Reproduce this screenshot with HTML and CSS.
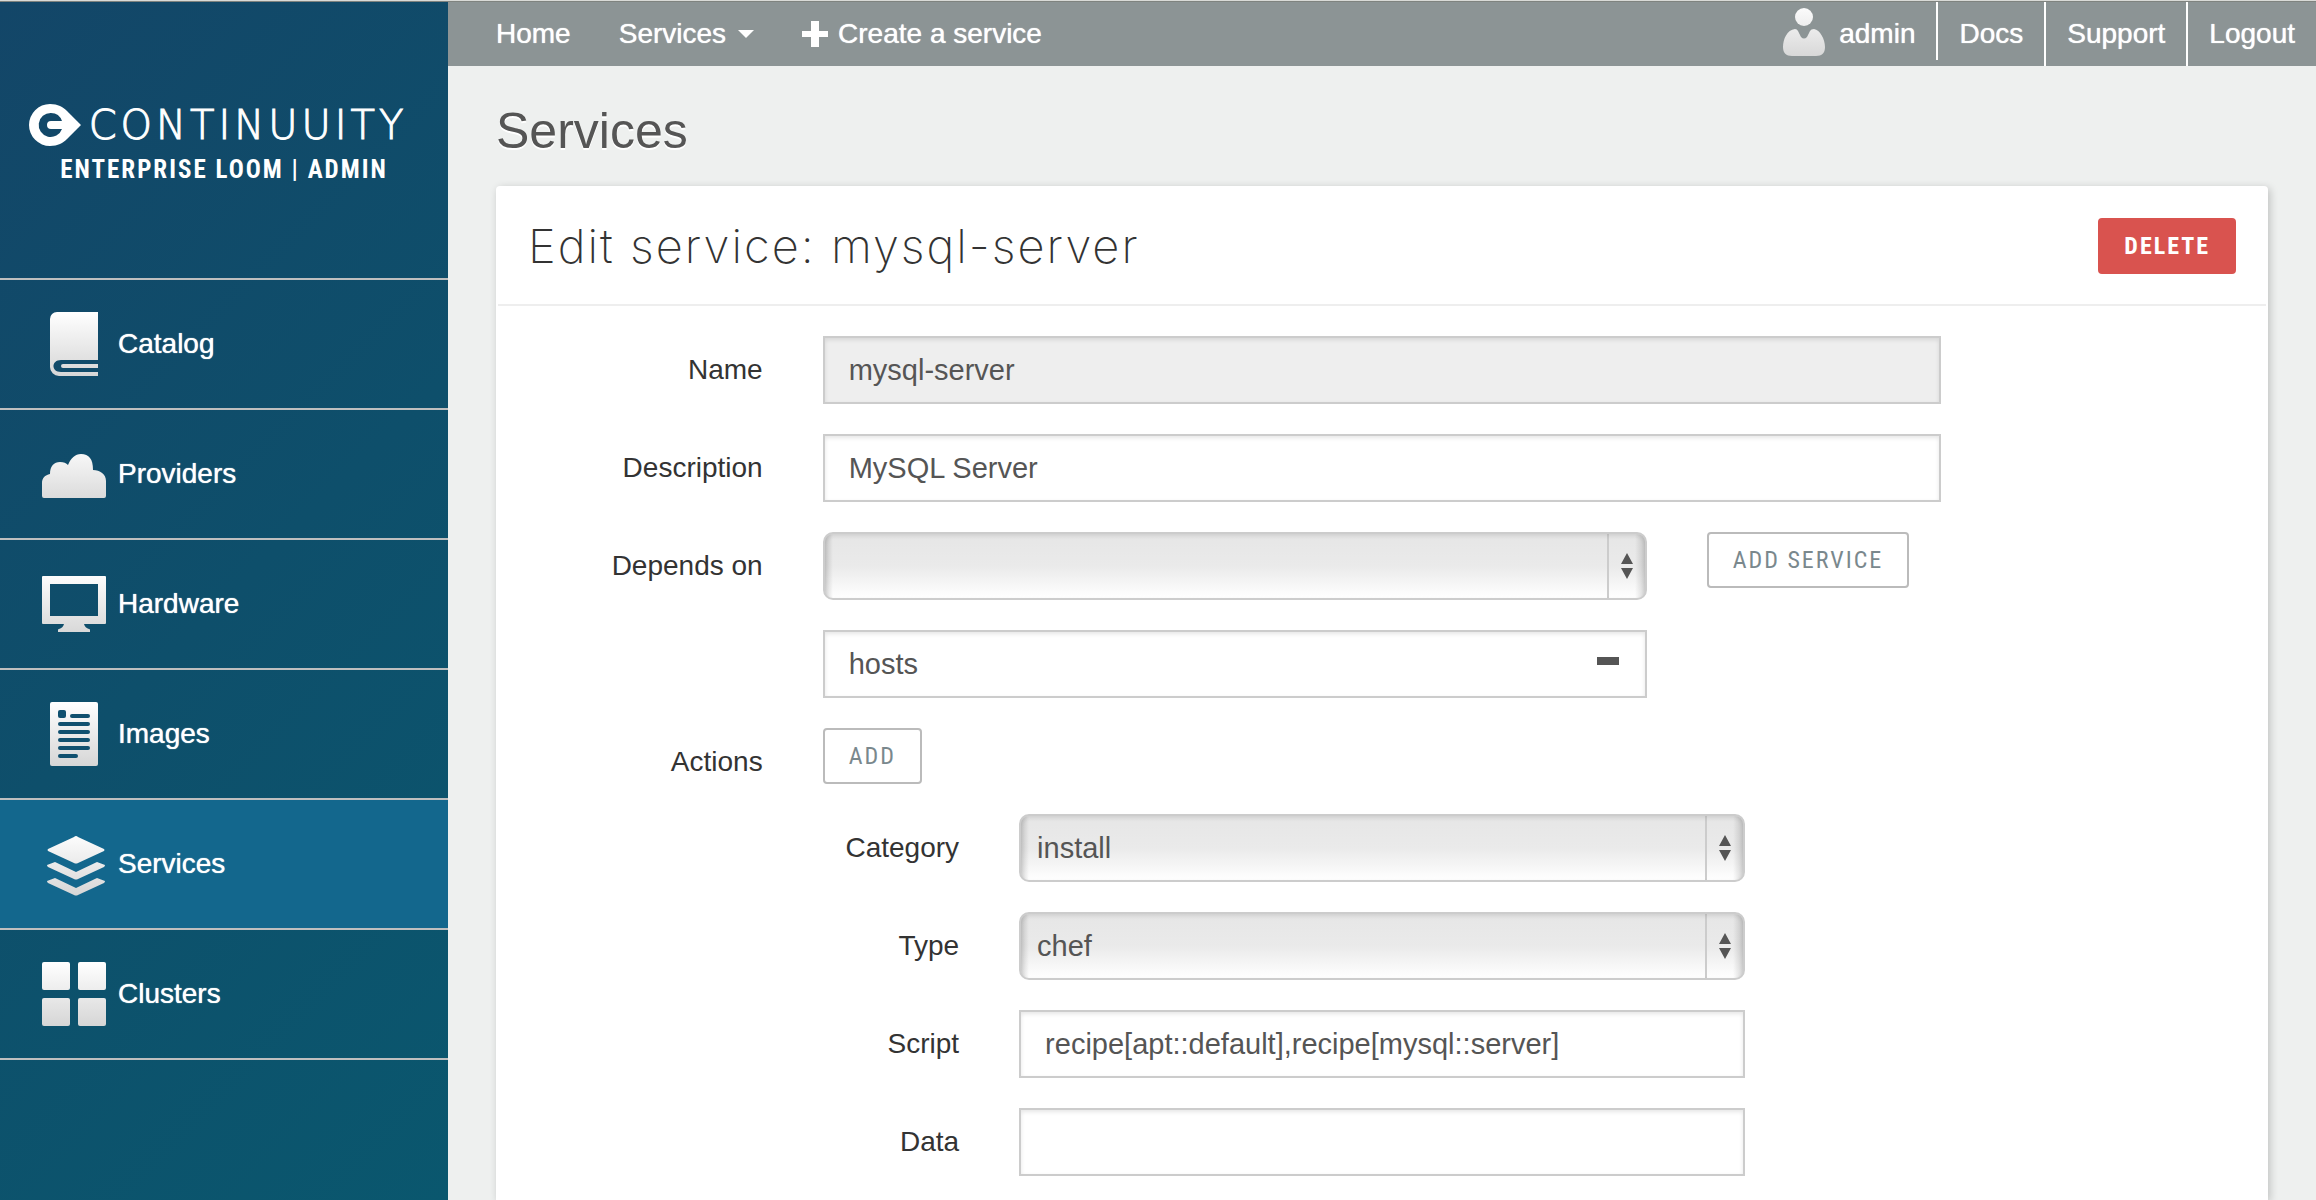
FILE: index.html
```html
<!DOCTYPE html>
<html lang="en">
<head>
<meta charset="utf-8">
<title>Edit service: mysql-server</title>
<link rel="stylesheet" href="styles.css">
</head>
<body>
<svg class="defs" width="0" height="0" aria-hidden="true">
  <defs>
    <linearGradient id="shade" gradientUnits="userSpaceOnUse" x1="0" y1="0" x2="0" y2="64">
      <stop offset="0" stop-color="#ffffff"/>
      <stop offset="1" stop-color="#d6d6d6"/>
    </linearGradient>
    <linearGradient id="shade-user" gradientUnits="userSpaceOnUse" x1="0" y1="0" x2="0" y2="48">
      <stop offset="0" stop-color="#fbfbfb"/>
      <stop offset="1" stop-color="#d8d8d8"/>
    </linearGradient>
  </defs>
</svg>
<div class="layout">
  <aside class="sidebar">
    <div class="brand">
      <a class="brand-name" href="#">
        <svg width="52" height="42" viewBox="0 0 52 42" aria-hidden="true">
          <path fill="#fff" fill-rule="evenodd" d="M21 0C29 0 34 3 38 7L52 21L38 35C34 39 29 42 21 42A21 21 0 0 1 21 0ZM22 9A12 12 0 1 0 33 25H22A4 4 0 0 1 22 17H33A12 12 0 0 0 22 9Z"/>
        </svg>
        <span class="wordmark">CONTINUUITY</span>
      </a>
      <div class="brand-sub">ENTERPRISE LOOM | ADMIN</div>
    </div>
    <nav class="side-nav">
      <a href="#">
        <svg width="64" height="64" aria-hidden="true"><path fill="url(#shade)" d="M15 0H56V48H19C9 48 9 60 19 60H56V64H17A9 9 0 0 1 8 55V7A7 7 0 0 1 15 0ZM21 52H56V56H21A2 2 0 0 1 21 52Z"/></svg>
        Catalog
      </a>
      <a href="#">
        <svg width="64" height="64" aria-hidden="true"><path fill="url(#shade)" d="M2 56Q0 56 0 54V41C0 36 3 33 8 32C8 24 12 20 18 20C22 20 24 21 26 23C29 16 33 12 39 12C47 12 51 17 51 28C58 28 64 32 64 39V54Q64 56 62 56Z"/></svg>
        Providers
      </a>
      <a href="#">
        <svg width="64" height="64" aria-hidden="true"><path fill="url(#shade)" fill-rule="evenodd" d="M1 4H63Q64 4 64 5V51Q64 52 63 52H42Q43 56 47 57Q48 57 48 58V60H16V58Q16 57 17 57Q21 56 22 52H1Q0 52 0 51V5Q0 4 1 4ZM8 12V44H56V12Z"/></svg>
        Hardware
      </a>
      <a href="#">
        <svg width="64" height="64" aria-hidden="true"><rect x="8" width="48" height="64" rx="2" fill="url(#shade)"/><g fill="#10506f"><rect x="16" y="8" width="8" height="8" rx="2"/><rect x="28" y="12" width="20" height="4" rx="2"/><rect x="16" y="20" width="32" height="4" rx="2"/><rect x="16" y="28" width="32" height="4" rx="2"/><rect x="16" y="36" width="32" height="4" rx="2"/><rect x="16" y="44" width="32" height="4" rx="2"/><rect x="16" y="52" width="20" height="4" rx="2"/></g></svg>
        Images
      </a>
      <a class="active" href="#">
        <svg width="64" height="64" aria-hidden="true"><path fill="url(#shade)" d="M34 4Q35 4 36 5L62 17Q63 18 62 19L36 31Q34 32 32 31L6 19Q5 18 6 17L32 5Q33 4 34 4ZM5 33L13 30L34 40L55 30L63 33Q63 34 62 35L36 47Q34 48 32 47L6 35Q5 34 5 33ZM5 49L13 46L34 56L55 46L63 49Q63 50 62 51L36 63Q34 64 32 63L6 51Q5 50 5 49Z"/></svg>
        Services
      </a>
      <a href="#">
        <svg width="64" height="64" aria-hidden="true"><g fill="url(#shade)"><rect width="28" height="28" rx="2"/><rect x="36" width="28" height="28" rx="2"/><rect y="36" width="28" height="28" rx="2"/><rect x="36" y="36" width="28" height="28" rx="2"/></g></svg>
        Clusters
      </a>
    </nav>
  </aside>
  <div class="main">
    <header class="topbar">
      <nav class="menu">
        <a href="#">Home</a>
        <a href="#">Services <svg class="caret" width="16" height="8" aria-hidden="true"><path fill="#fff" d="M0 0H16L8 8Z"/></svg></a>
        <a class="create" href="#"><svg width="26" height="26" aria-hidden="true"><path fill="#fff" d="M9 0H17V10H26V16H17V26H9V16H0V10H9Z"/></svg>Create a service</a>
      </nav>
      <nav class="account">
        <a class="user" href="#"><svg width="42" height="48" aria-hidden="true"><g fill="url(#shade-user)"><ellipse cx="21" cy="9" rx="9" ry="9"/><path d="M12 21Q14 21 15 23L18 29Q21 32 24 29L27 23Q28 21 31 21C37 22 42 31 42 39C42 45 39 48 33 48H9C3 48 0 45 0 39C0 31 4 22 12 21Z"/></g></svg>admin</a>
        <a href="#">Docs</a>
        <a href="#">Support</a>
        <a href="#">Logout</a>
      </nav>
    </header>
    <main class="content">
      <h1>Services</h1>
      <section class="card">
        <div class="card-head">
          <h2>Edit service: mysql-server</h2>
          <button class="btn btn-danger" type="button">DELETE</button>
        </div>
        <form class="form">
          <div class="row">
            <label for="name">Name</label>
            <div class="cell"><input class="field" id="name" type="text" value="mysql-server" disabled></div>
          </div>
          <div class="row">
            <label for="description">Description</label>
            <div class="cell"><input class="field" id="description" type="text" value="MySQL Server"></div>
          </div>
          <div class="row">
            <label for="depends">Depends on</label>
            <div class="depends">
              <div class="cell stack">
                <div class="picker">
                  <select id="depends"><option></option><option>hosts</option></select>
                  <svg width="12" height="26" aria-hidden="true"><path fill="#555" d="M6 0L12 11H0ZM0 15H12L6 26Z"/></svg>
                </div>
                <div class="field dependency">
                  <span>hosts</span>
                  <button class="remove" type="button" aria-label="Remove hosts"><svg width="22" height="14" aria-hidden="true"><rect width="22" height="8" fill="#555"/></svg></button>
                </div>
              </div>
              <div class="cell"><button class="btn" type="button">ADD SERVICE</button></div>
            </div>
          </div>
          <div class="row">
            <label for="add-action">Actions</label>
            <div class="stack">
              <div class="cell"><button class="btn" id="add-action" type="button">ADD</button></div>
              <div class="row">
                <label for="category">Category</label>
                <div class="cell"><div class="picker">
                  <select id="category"><option>install</option></select>
                  <svg width="12" height="26" aria-hidden="true"><path fill="#555" d="M6 0L12 11H0ZM0 15H12L6 26Z"/></svg>
                </div></div>
              </div>
              <div class="row">
                <label for="type">Type</label>
                <div class="cell"><div class="picker">
                  <select id="type"><option>chef</option></select>
                  <svg width="12" height="26" aria-hidden="true"><path fill="#555" d="M6 0L12 11H0ZM0 15H12L6 26Z"/></svg>
                </div></div>
              </div>
              <div class="row">
                <label for="script">Script</label>
                <div class="cell"><input class="field" id="script" type="text" value="recipe[apt::default],recipe[mysql::server]"></div>
              </div>
              <div class="row">
                <label for="data">Data</label>
                <div class="cell"><input class="field" id="data" type="text"></div>
              </div>
            </div>
          </div>
        </form>
      </section>
    </main>
  </div>
</div>
</body>
</html>
```
FILE: styles.css
```css
* {
  box-sizing: border-box;
}

body {
  margin: 0;
  background: #eef0ef;
  border-top: 1px solid #d9dad7;
  color: #333;
  font: 28px/40px "Liberation Sans", Arial, sans-serif;
}

a {
  color: #fff;
  text-decoration: none;
}

svg {
  display: block;
  flex: none;
}

.defs {
  position: absolute;
}

.layout {
  display: flex;
  min-height: calc(100vh - 1px);
  border-top: 1px solid #7f837f;
}

/* Sidebar */

.sidebar {
  flex: none;
  width: 448px;
  background: linear-gradient(135deg, #134668 0%, #0e4f6b 50%, #0a576e 100%);
}

.brand {
  display: flex;
  flex-direction: column;
  align-items: center;
  height: 278px;
  padding-top: 100px;
  border-bottom: 2px solid #bfbfbf;
  color: #fff;
}

.brand-name {
  display: flex;
  align-items: center;
  gap: 8px;
  padding-right: 12px;
}

.wordmark {
  font: 200 40px/46px "DejaVu Sans", sans-serif;
  letter-spacing: 4px;
  -webkit-text-stroke: 1px #fff;
}

.brand-sub {
  margin-top: 6px;
  font: bold 25px/32px "Liberation Sans Narrow", "Roboto Condensed", "Liberation Sans", sans-serif;
  letter-spacing: 2px;
}

.side-nav a {
  display: flex;
  align-items: center;
  gap: 12px;
  height: 130px;
  padding-left: 42px;
  border-bottom: 2px solid #bfbfbf;
  text-shadow: 0 0 1px #fff;
}

.side-nav .active {
  background: #13678d;
}

/* Top bar */

.main {
  flex: 1;
  min-width: 0;
  display: flex;
  flex-direction: column;
}

.topbar {
  display: flex;
  justify-content: space-between;
  height: 64px;
  padding-left: 48px;
  background: #8c9495;
  text-shadow: 0 0 1px #fff;
}

.menu,
.menu a,
.account,
.user {
  display: flex;
}

.menu {
  gap: 48px;
}

.menu a {
  align-items: center;
  gap: 12px;
  height: 64px;
}

.menu .create {
  gap: 10px;
}

.account a {
  height: 64px;
  padding: 0 21px;
  border-right: 2px solid #fff;
  line-height: 64px;
}

.account a:last-child {
  border-right: 0;
}

.account .user {
  gap: 14px;
  height: 58px;
}

.user svg {
  margin-top: 6px;
}

/* Content */

.content {
  flex: 1;
  display: flex;
  flex-direction: column;
  padding: 0 48px;
}

h1 {
  margin: 35px 0 25px;
  color: #555;
  font-size: 50px;
  font-weight: normal;
  line-height: 60px;
  text-shadow: 0 2px 0 #fff;
}

.card {
  flex: 1;
  background: #fff;
  border-radius: 4px 4px 0 0;
  box-shadow: 2px 2px 8px rgba(0, 0, 0, 0.2);
}

.card-head {
  display: flex;
  justify-content: space-between;
  margin: 0 2px;
  padding: 32px 30px 30px;
  border-bottom: 2px solid #eee;
}

h2 {
  margin: 0;
  font: 200 47px/56px Inter, sans-serif;
  letter-spacing: 2px;
}

.btn {
  display: block;
  height: 56px;
  padding: 0 24px;
  background: #fff;
  border: 2px solid #bbb;
  border-radius: 4px;
  color: #7a888d;
  font: 24px/52px "Liberation Sans Narrow", "Roboto Condensed", "Liberation Sans", sans-serif;
  letter-spacing: 2px;
}

.btn-danger {
  background: #d9534f;
  border-color: #d9534f;
  color: #fff;
  font-weight: bold;
}

/* Form */

.form {
  display: flex;
  flex-direction: column;
  gap: 30px;
  margin: 0 2px;
  padding: 30px 0 24px;
}

.row {
  display: grid;
  grid-template-columns: minmax(0, 2fr) minmax(0, 8fr) minmax(0, 2fr);
}

.row > label {
  padding-right: 30px;
  line-height: 68px;
  text-align: right;
}

.cell {
  padding: 0 30px;
}

.stack {
  display: flex;
  flex-direction: column;
  gap: 30px;
}

.depends {
  display: grid;
  grid-template-columns: minmax(0, 3fr) minmax(0, 1fr);
}

.depends .btn {
  white-space: nowrap;
}

.field {
  display: block;
  width: 100%;
  height: 68px;
  padding: 0 24px;
  background: #fff;
  border: 2px solid #ccc;
  border-radius: 0;
  box-shadow: inset 0 2px 4px rgba(0, 0, 0, 0.1);
  color: #555;
  font: 29px "Liberation Sans", Arial, sans-serif;
}

.field:disabled {
  background: #eee;
}

.dependency {
  display: flex;
  align-items: center;
  justify-content: space-between;
}

.remove {
  padding: 0 2px;
  background: none;
  border: 0;
}

.picker {
  position: relative;
}

.picker select {
  display: block;
  width: 100%;
  height: 68px;
  padding: 0 48px 0 16px;
  appearance: none;
  background:
    linear-gradient(90deg, rgba(0, 0, 0, 0.15), transparent) left / 8px 100% no-repeat,
    linear-gradient(270deg, rgba(0, 0, 0, 0.15), transparent) right / 10px 100% no-repeat,
    linear-gradient(#ccc, #ccc) right 36px top / 2px 100% no-repeat,
    linear-gradient(#e6e6e6, #eaeaea 50%, #fff);
  border: 2px solid #ccc;
  border-radius: 10px;
  box-shadow: inset 0 2px 4px rgba(0, 0, 0, 0.1);
  color: #555;
  font: 29px "Liberation Sans", Arial, sans-serif;
}

.picker svg {
  position: absolute;
  top: 21px;
  right: 14px;
  pointer-events: none;
}
```
